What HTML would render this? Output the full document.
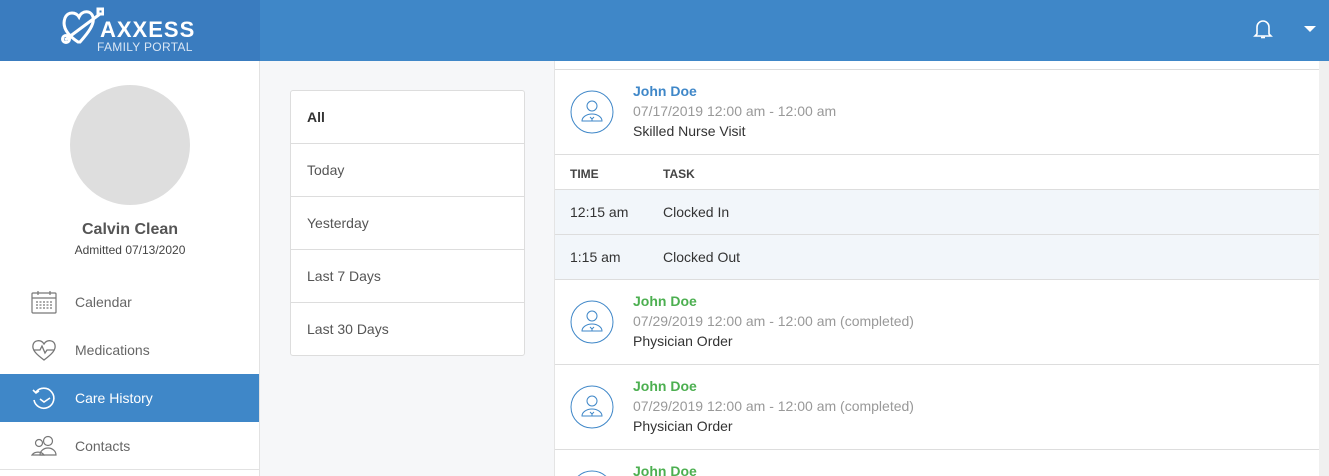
<!DOCTYPE html>
<html><head><meta charset="utf-8"><style>
*{box-sizing:border-box;margin:0;padding:0}
html,body{width:1329px;height:476px;overflow:hidden}
body{font-family:"Liberation Sans",sans-serif;background:#f6f7f9;position:relative}
.top{position:absolute;left:0;top:0;width:1329px;height:61px;background:#3f87c8}
.logo{position:absolute;left:0;top:0;width:260px;height:61px;background:#3a7cbf}
.side{position:absolute;left:0;top:61px;width:260px;height:415px;background:#fff;border-right:1px solid #e2e2e2;overflow:hidden}
.av{position:absolute;left:70px;top:24px;width:120px;height:120px;border-radius:50%;background:#dedede}
.nm{position:absolute;top:160px;width:260px;text-align:center;font-weight:bold;font-size:16px;color:#555}
.adm{position:absolute;top:182px;width:260px;text-align:center;font-size:12px;color:#444}
.mi{position:absolute;left:0;width:259px;height:48px;font-size:14px;color:#666;padding-left:75px;line-height:48px}
.mi svg{position:absolute;left:31px;top:12px}
.filt{position:absolute;left:290px;top:90px;width:235px;height:266px;background:#fff;border:1px solid #ddd;border-radius:3px}
.filt div{height:53px;line-height:52px;padding-left:16px;font-size:14px;color:#555;border-bottom:1px solid #ddd}
.filt div:last-child{border:none}
.main{position:absolute;left:554px;top:61px;width:765px;height:415px;background:#fff;border-left:1px solid #e4e4e4;overflow:hidden}
.sb{position:absolute;left:1319px;top:61px;width:10px;height:415px;background:#f0f0f0}
.ent{position:absolute;left:0;width:765px;height:85px;border-bottom:1px solid #ddd;overflow:hidden}
.ent .ic{position:absolute;left:15px;top:20px}
.ent .a{position:absolute;left:78px;top:13px;font-size:14px;font-weight:bold}
.ent .b{position:absolute;left:78px;top:33px;font-size:14px;color:#999}
.ent .c{position:absolute;left:78px;top:53px;font-size:14px;color:#333}
.row{position:absolute;left:0;width:765px;height:45px;background:#f2f6fa;border-bottom:1px solid #ddd;font-size:14px;color:#333;line-height:44px}
.row span{position:absolute}
</style></head><body>
<div class="top"></div>
<div class="logo">
<svg width="44" height="40" style="position:absolute;left:60px;top:6px" viewBox="0 0 44 40" fill="none" stroke="#fff" stroke-width="3"><path d="M18 36 C6 28 2 20 5 12 C8 5 16 6 19 11 C22 4 31 4 33 11 C35 18 28 27 20 36Z"/><path d="M5 34 L40 8"/><circle cx="6" cy="33" r="3.5"/><rect x="38" y="3" width="5" height="5"/></svg>
<div style="position:absolute;left:100px;top:17px;color:#fff;font-weight:bold;font-size:22px;letter-spacing:1px">AXXESS</div>
<div style="position:absolute;left:97px;top:40px;color:#d9e6f4;font-size:12px;letter-spacing:.3px">FAMILY PORTAL</div>
</div>
<svg width="20" height="22" style="position:absolute;left:1253px;top:18px" viewBox="0 0 20 22" fill="none" stroke="#fff" stroke-width="1.6"><path d="M4 16 V9 a6 6 0 0 1 12 0 V16 L18 18 H2 Z"/><path d="M8 19.5 h4"/></svg>
<div style="position:absolute;left:1304px;top:26px;width:0;height:0;border-left:6px solid transparent;border-right:6px solid transparent;border-top:6px solid #fff"></div>
<div class="side">
<div class="av"></div>
<div class="nm">Calvin Clean</div>
<div class="adm">Admitted 07/13/2020</div>
<div class="mi" style="top:217px"><svg width="26" height="24" viewBox="0 0 26 24" fill="none" stroke="#777" stroke-width="1.2"><rect x="1" y="3" width="24" height="20" rx="1"/><path d="M1 8h24M7 1v4M19 1v4"/><path d="M5 12h16M5 15h16M5 18h16" stroke-dasharray="2 1.5"/></svg>Calendar</div>
<div class="mi" style="top:265px"><svg width="26" height="24" viewBox="0 0 26 24" fill="none" stroke="#777" stroke-width="1.3"><path d="M13 22 C5 16 1 12 2 7 C3 2 10 1 13 6 C16 1 23 2 24 7 C25 12 21 16 13 22Z"/><path d="M3 12h6l2-4 3 7 2-3h7"/></svg>Medications</div>
<div class="mi" style="top:313px;background:#3f87c8;color:#fff"><svg width="26" height="26" viewBox="0 0 26 26" fill="none" stroke="#fff" stroke-width="1.6"><path d="M5 6 A10 10 0 1 1 3 14"/><path d="M2 4 l3 3 3-2"/><path d="M9 13 l4 3 6-4"/></svg>Care History</div>
<div class="mi" style="top:361px;border-bottom:1px solid #e2e2e2"><svg width="26" height="24" viewBox="0 0 26 24" fill="none" stroke="#777" stroke-width="1.2"><circle cx="8" cy="9" r="3.5"/><circle cx="17" cy="7" r="4.5"/><path d="M1 21 a7 6 0 0 1 12 0 Z"/><path d="M9 21 a8 7 0 0 1 16 0 Z"/></svg>Contacts</div>
</div>
<div class="filt"><div style="font-weight:bold;color:#333">All</div><div>Today</div><div>Yesterday</div><div>Last 7 Days</div><div>Last 30 Days</div></div>
<div class="main">
<div style="position:absolute;left:0;top:8px;width:765px;border-top:1px solid #ddd"></div>
<div class="ent" style="top:9px">
<svg class="ic" width="44" height="44" viewBox="0 0 44 44" fill="none" stroke="#3f87c8" stroke-width="1"><circle cx="22" cy="22" r="21"/><circle cx="22" cy="16" r="5"/><path d="M12 31 a10 7 0 0 1 20 0 Z"/><path d="M20 27l2 2 2-2M22 29v2"/></svg>
<div class="a" style="color:#3f87c8">John Doe</div><div class="b">07/17/2019 12:00 am - 12:00 am</div><div class="c">Skilled Nurse Visit</div></div>
<div style="position:absolute;top:95px;left:0;width:765px;height:34px;border-bottom:1px solid #ddd;font-size:12px;font-weight:bold;color:#444;line-height:36px"><span style="position:absolute;left:15px">TIME</span><span style="position:absolute;left:108px">TASK</span></div>
<div class="row" style="top:129px"><span style="left:15px">12:15 am</span><span style="left:108px">Clocked In</span></div>
<div class="row" style="top:174px"><span style="left:15px">1:15 am</span><span style="left:108px">Clocked Out</span></div>
<div class="ent" style="top:219px">
<svg class="ic" width="44" height="44" viewBox="0 0 44 44" fill="none" stroke="#3f87c8" stroke-width="1"><circle cx="22" cy="22" r="21"/><circle cx="22" cy="16" r="5"/><path d="M12 31 a10 7 0 0 1 20 0 Z"/><path d="M20 27l2 2 2-2M22 29v2"/></svg>
<div class="a" style="color:#4caf50">John Doe</div><div class="b">07/29/2019 12:00 am - 12:00 am (completed)</div><div class="c">Physician Order</div></div>
<div class="ent" style="top:304px">
<svg class="ic" width="44" height="44" viewBox="0 0 44 44" fill="none" stroke="#3f87c8" stroke-width="1"><circle cx="22" cy="22" r="21"/><circle cx="22" cy="16" r="5"/><path d="M12 31 a10 7 0 0 1 20 0 Z"/><path d="M20 27l2 2 2-2M22 29v2"/></svg>
<div class="a" style="color:#4caf50">John Doe</div><div class="b">07/29/2019 12:00 am - 12:00 am (completed)</div><div class="c">Physician Order</div></div>
<div class="ent" style="top:389px;height:26px;border:none">
<svg class="ic" width="44" height="44" viewBox="0 0 44 44" fill="none" stroke="#3f87c8" stroke-width="1"><circle cx="22" cy="22" r="21"/></svg>
<div class="a" style="color:#4caf50">John Doe</div></div>
</div>
<div class="sb"></div>
</body></html>
